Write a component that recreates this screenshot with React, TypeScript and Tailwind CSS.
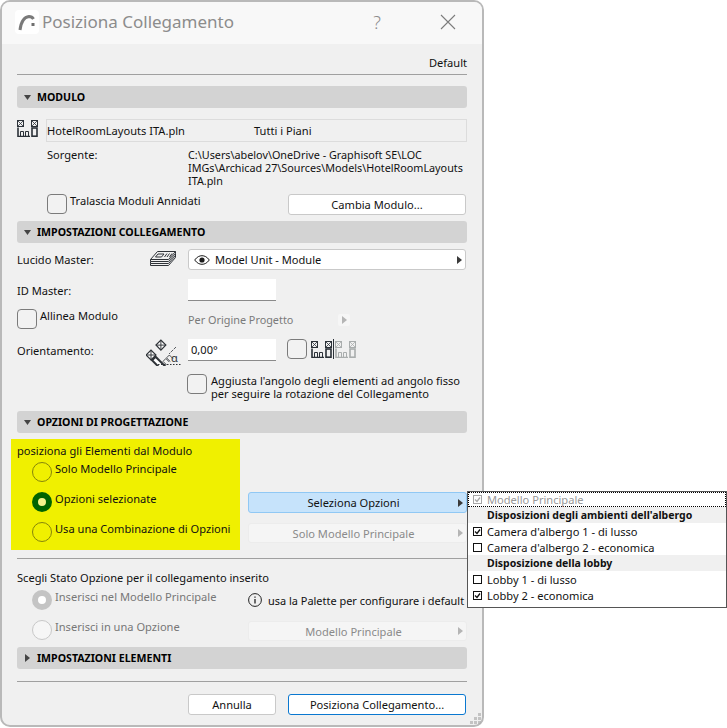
import React from "react";

const uiFont = "font-['Noto_Sans',sans-serif] text-[11.1px] leading-[13px] text-[#111]";

const ModuleIcon = ({ dim = false, className = "" }: { dim?: boolean; className?: string }) => {
  const c = dim ? "#a9adad" : "#2b3138";
  return (
    <svg viewBox="0 0 21 17" width="21" height="17" className={className} fill="none" stroke={c}>
      <rect x="0.5" y="0.5" width="6" height="6" />
      <path d="M1 1l5 5M6 1l-5 5" strokeWidth="0.8" />
      <rect x="14.5" y="0.5" width="6" height="6" />
      <path d="M15 1l5 5M20 1l-5 5" strokeWidth="0.8" />
      <path d="M1 7.5V16.5H13" strokeWidth="1.6" />
      <path d="M3.5 16v-4.5h3V16M8.5 16v-4.5h3V16" strokeWidth="1" />
      <rect x="15" y="8" width="5" height="8.2" strokeWidth="1.6" />
    </svg>
  );
};

const LayersIcon = () => (
  <svg viewBox="0 0 26 18" width="26" height="18" fill="none" stroke="#2f3338" strokeWidth="1">
    <path d="M7.5 0.5h18l-7 8h-18z" />
    <path d="M8 3h6l-2.5 3h-6z" />
    <path d="M17 2.5l-2.5 3.5M19.5 2.5L17 6M22 2.5L19.5 6" />
    <path d="M0.5 8.5v2h18l7-8v-2" />
    <path d="M0.5 10.5v2h18l7-8" />
    <path d="M0.5 12.5v2h18l7-8" />
    <path d="M25.5 2.5v4" />
  </svg>
);

const AngleIcon = () => (
  <svg viewBox="0 0 36 28" width="36" height="28" fill="none" stroke="#2f3338">
    <g transform="translate(1 13) rotate(-45 4 4) rotate(0)">
      <rect x="0.5" y="0.5" width="7" height="7" fill="#fff" strokeWidth="1.2" />
      <path d="M1 1l6 6M7 1l-6 6" strokeWidth="0.9" />
      <rect x="14.5" y="0.5" width="7" height="7" fill="#fff" strokeWidth="1.2" />
      <path d="M15 1l6 6M21 1l-6 6" strokeWidth="0.9" />
      <rect x="1" y="8.5" width="5" height="14" fill="#fff" strokeWidth="2" />
      <path d="M8 22v-5h4v5M13 22v-5h4v5" strokeWidth="0.8" />
    </g>
    <path d="M30 9l-7 7" strokeWidth="0.8" strokeDasharray="3 1" />
    <path d="M12 26.5h23" strokeDasharray="1.5 1.5" strokeWidth="1" />
    <text x="25" y="24" fontSize="11" fill="#2f3338" stroke="none" fontFamily="Noto Sans">α</text>
  </svg>
);

const EyeIcon = () => (
  <svg viewBox="0 0 16 10" width="16" height="10" fill="none" stroke="#1c1c1c">
    <path d="M0.7 5C3 1.8 5.5 0.7 8 0.7S13 1.8 15.3 5C13 8.2 10.5 9.3 8 9.3S3 8.2 0.7 5z" />
    <circle cx="8" cy="5" r="2.6" fill="#1c1c1c" stroke="none" />
  </svg>
);

const Arrow = ({ color = "#3a3a3a" }: { color?: string }) => (
  <svg viewBox="0 0 5 8" width="5" height="8">
    <path d="M0 0l5 4-5 4z" fill={color} />
  </svg>
);

const SectionHeader = ({ title, open = true, className = "" }: { title: string; open?: boolean; className?: string }) => (
  <div className={`flex h-[22px] items-center rounded-[3px] bg-[#d3d3d3] ${className}`}>
    <div className="flex w-[20px] justify-center">
      {open ? (
        <svg viewBox="0 0 7 5" width="7" height="5">
          <path d="M0 0h7l-3.5 5z" fill="#444" />
        </svg>
      ) : (
        <svg viewBox="0 0 5 8" width="5" height="8">
          <path d="M0 0l5 4-5 4z" fill="#444" />
        </svg>
      )}
    </div>
    <span className="text-[10.6px] font-bold text-black">{title}</span>
  </div>
);

const CheckBox = ({ label, className = "" }: { label?: React.ReactNode; className?: string }) => (
  <div className={`flex items-start ${className}`}>
    <div className="h-[20px] w-[20px] shrink-0 rounded-[4px] border border-[#7b7b7b] bg-[#f2f2f2]" />
    {label && <div className="ml-[3px] whitespace-nowrap">{label}</div>}
  </div>
);

const Radio = ({ label, state }: { label: string; state: "yellow" | "yellowOn" | "grayOn" | "gray" }) => {
  let ring = "border border-[#85850a]";
  if (state === "yellowOn") ring = "border-[6px] border-[#006400] bg-[#f4f48a]";
  if (state === "grayOn") ring = "border-[6px] border-[#c4c4c4] bg-white";
  if (state === "gray") ring = "border border-[#c8c8c8] bg-[#f6f6f6]";
  const disabled = state === "grayOn" || state === "gray";
  return (
    <div className="flex h-[20px] items-start">
      <div className={`h-[20px] w-[20px] shrink-0 rounded-full ${ring}`} />
      <div className={`ml-[3px] whitespace-nowrap ${disabled ? "text-[#777]" : ""}`}>{label}</div>
    </div>
  );
};

const Popup = ({ label, disabled = false, active = false }: { label: string; disabled?: boolean; active?: boolean }) => (
  <div
    className={`flex items-center rounded-[3px] border ${
      active
        ? "h-[21px] border-[#90c8f4] bg-[#c6e3fb]"
        : disabled
          ? "h-[20px] border-[#ececec] bg-[#f5f5f5] text-[#8a8a8a]"
          : "h-[21px] border-[#c9c9c9] bg-white"
    }`}
  >
    <span className="flex-1 text-center">{label}</span>
    <span className="mr-[3px]">
      <Arrow color={disabled ? "#b5b5b5" : "#3a3a3a"} />
    </span>
  </div>
);

const MenuRow = ({ label, state, header = false, top = false }: { label: string; state?: "on" | "off"; header?: boolean; top?: boolean }) => (
  <div
    className={`flex items-center ${top ? "h-[15px] border border-dotted border-black text-[#999]" : "h-[16px]"} ${
      header ? "bg-[#f0f0f0] text-[10.5px] font-bold" : ""
    }`}
  >
    <div className={`flex w-[19px] justify-center ${top ? "-ml-px" : ""}`}>
      {state && (
        <svg viewBox="0 0 9 9" width="9" height="9" fill="none" stroke={top ? "#a8a8a8" : "#111"}>
          <rect x="0.5" y="0.5" width="8" height="8" />
          {(state === "on" || top) && <path d="M2 4.5l2 2 3-4" strokeWidth="1.3" />}
        </svg>
      )}
    </div>
    <span>{label}</span>
  </div>
);

export default function App() {
  return (
    <div className={`h-[728px] w-[727px] bg-white ${uiFont}`}>
      <div className="relative h-[727px] w-[484px] rounded-[10px] border-2 border-[#b9b9b9] bg-[#f0f0f0]">
        {/* title bar */}
        <div className="flex h-[42px] items-center rounded-t-[8px] bg-[#f8f8f8] pb-[3px] pl-[13px] pr-[26px]">
          <div className="flex h-[24px] w-[24px] items-center justify-center rounded-[4px] bg-white">
            <svg viewBox="0 0 20 20" width="20" height="20" fill="none">
              <path d="M3 18C4 10 7 5 12 4.5c2 0 3.5 .8 4.5 2.5" stroke="#7a7a7a" strokeWidth="3" />
              <rect x="14.5" y="11" width="3" height="3" fill="#6f6f6f" />
            </svg>
          </div>
          <span className="ml-[3px] flex-1 text-[17px] leading-none text-[#8c8c8c]">Posiziona Collegamento</span>
          <span className="mr-[59px] text-[18px] font-light leading-none text-[#8c8c8c]">?</span>
          <svg viewBox="0 0 16 16" width="16" height="16" stroke="#7c7c7c" strokeWidth="1.1">
            <path d="M1 1l14 14M15 1L1 15" />
          </svg>
        </div>

        <div className="pl-[15px] pr-[15px]">
          <div className="flex h-[31px] items-end justify-end border-b border-[#a0a0a0] pb-[5px]">Default</div>

          <SectionHeader title="MODULO" className="mt-[11px]" />
          <div className="mt-[11px] flex h-[23px] items-start">
            <ModuleIcon className="mt-[1px] w-[21px] shrink-0" />
            <div className="ml-[8px] flex h-[23px] flex-1 items-center border border-[#dcdcdc]">
              <span className="w-[207px]">HotelRoomLayouts ITA.pln</span>
              <span>Tutti i Piani</span>
            </div>
          </div>
          <div className="mt-[6px] flex pl-[30px]">
            <div className="w-[141px]">Sorgente:</div>
            <div className="w-[279px] whitespace-nowrap text-[10.8px]">
              C:\Users\abelov\OneDrive - Graphisoft SE\LOC
              <br />
              IMGs\Archicad 27\Sources\Models\HotelRoomLayouts
              <br />
              ITA.pln
            </div>
          </div>
          <div className="mt-[7px] flex h-[20px] items-start pl-[30px]">
            <CheckBox label="Tralascia Moduli Annidati" className="w-[241px]" />
            <div className="flex h-[21px] w-[178px] items-center justify-center rounded-[3px] border border-[#c9c9c9] bg-white">
              Cambia Modulo...
            </div>
          </div>

          <SectionHeader title="IMPOSTAZIONI COLLEGAMENTO" className="mt-[7px]" />
          <div className="mt-[6px] flex h-[21px] items-center">
            <div className="w-[133px]">Lucido Master:</div>
            <div className="w-[38px]">
              <LayersIcon />
            </div>
            <div className="flex h-[21px] w-[278px] items-center rounded-[3px] border border-[#c9c9c9] bg-white pl-[5px]">
              <EyeIcon />
              <span className="ml-[5px] flex-1">Model Unit - Module</span>
              <span className="mr-[3px]">
                <Arrow />
              </span>
            </div>
          </div>
          <div className="mt-[9px] flex h-[22px] items-center">
            <div className="w-[171px]">ID Master:</div>
            <div className="h-[22px] w-[88px] border-b border-[#8a8a8a] bg-white" />
          </div>
          <div className="mt-[8px] flex h-[20px] items-start">
            <CheckBox label="Allinea Modulo" className="w-[171px]" />
            <div className="mt-[4px] flex items-center text-[10.85px] text-[#7a7a7a]">
              <span className="w-[150px]">Per Origine Progetto</span>
              <span className="mt-[1px] flex h-[12px] w-[12px] items-center justify-center rounded-[2px] bg-[#f6f6f6]">
                <Arrow color="#b5b5b5" />
              </span>
            </div>
          </div>
          <div className="mt-[10px] flex h-[22px] items-center">
            <div className="w-[129px]">Orientamento:</div>
            <div className="mt-[4px] h-[28px] w-[42px]">
              <AngleIcon />
            </div>
            <div className="flex h-[22px] w-[88px] items-center border-b border-[#8a8a8a] bg-white pl-[3px]">0,00°</div>
            <div className="ml-[11px] -mt-[2px]">
              <CheckBox />
            </div>
            <ModuleIcon className="ml-[4px] -mt-[2px]" />
            <div className="ml-[1px] -mt-[2px] h-[20px] w-px bg-[#2b3138]" />
            <ModuleIcon dim className="ml-[1px] -mt-[2px]" />
          </div>
          <div className="mt-[13px] flex h-[20px] items-start pl-[170px]">
            <CheckBox
              label={
                <div className="pl-[1px]">
                  Aggiusta l'angolo degli elementi ad angolo fisso
                  <br />
                  per seguire la rotazione del Collegamento
                </div>
              }
            />
          </div>

          <SectionHeader title="OPZIONI DI PROGETTAZIONE" className="mt-[17px]" />
          <div className="mt-[6px] flex h-[111px]">
            <div className="-ml-[6px] h-[111px] w-[229px] shrink-0 bg-[#f0f000] pl-[6px] pt-[5px]">
              <div>posiziona gli Elementi dal Modulo</div>
              <div className="mt-[5px] flex flex-col gap-[10px] pl-[15px]">
                <Radio label="Solo Modello Principale" state="yellow" />
                <Radio label="Opzioni selezionate" state="yellowOn" />
                <Radio label="Usa una Combinazione di Opzioni" state="yellow" />
              </div>
            </div>
            <div className="ml-[8px] w-[219px] pt-[53px]">
              <Popup label="Seleziona Opzioni" active />
              <div className="mt-[10px]">
                <Popup label="Solo Modello Principale" disabled />
              </div>
            </div>
          </div>
          <div className="mt-[8px] h-px bg-[#a0a0a0]" />
          <div className="mt-[12px]">Scegli Stato Opzione per il collegamento inserito</div>
          <div className="mt-[6px] flex h-[50px]">
            <div className="flex w-[231px] flex-col gap-[10px] pl-[15px]">
              <Radio label="Inserisci nel Modello Principale" state="grayOn" />
              <Radio label="Inserisci in una Opzione" state="gray" />
            </div>
            <div className="w-[219px]">
              <div className="mt-[3px] flex h-[14px] items-center">
                <svg viewBox="0 0 14 14" width="14" height="14" fill="none" stroke="#222" className="shrink-0">
                  <circle cx="7" cy="7" r="6.4" />
                  <path d="M7 6v4.5M7 3.4v1.3" strokeWidth="1.3" />
                </svg>
                <span className="ml-[6px] whitespace-nowrap text-[10.95px]">usa la Palette per configurare i default</span>
              </div>
              <div className="mt-[14px]">
                <Popup label="Modello Principale" disabled />
              </div>
            </div>
          </div>

          <SectionHeader title="IMPOSTAZIONI ELEMENTI" open={false} className="mt-[7px]" />
          <div className="mt-[12px] h-px bg-[#a0a0a0]" />
          <div className="mt-[12px] flex h-[21px] pl-[171px]">
            <div className="flex w-[88px] items-center justify-center rounded-[3px] border border-[#c9c9c9] bg-white">Annulla</div>
            <div className="ml-[12px] flex w-[178px] items-center justify-center rounded-[3px] border border-[#0a78d0] bg-white">
              Posiziona Collegamento...
            </div>
          </div>
        </div>

        {/* resize grip */}
        <div className="absolute bottom-[1px] right-[1px] grid grid-cols-3 gap-[1px] opacity-70">
          {[0, 0, 1, 0, 1, 1, 1, 1, 1].map((on, i) => (
            <div key={i} className={`h-[3px] w-[3px] ${on ? "bg-[#b0b0b0]" : ""}`} />
          ))}
        </div>

        {/* options menu */}
        <div className="absolute left-[465px] top-[489px] w-[260px] border border-[#555] bg-white pb-[4px] whitespace-nowrap">
          <MenuRow label="Modello Principale" state="on" top />
          <MenuRow label="Disposizioni degli ambienti dell'albergo" header />
          <MenuRow label="Camera d'albergo 1 - di lusso" state="on" />
          <MenuRow label="Camera d'albergo 2 - economica" state="off" />
          <MenuRow label="Disposizione della lobby" header />
          <MenuRow label="Lobby 1 - di lusso" state="off" />
          <MenuRow label="Lobby 2 - economica" state="on" />
        </div>
      </div>
    </div>
  );
}
